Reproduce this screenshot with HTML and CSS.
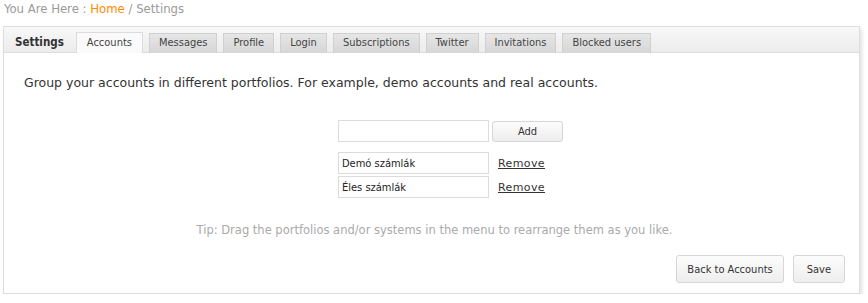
FILE: index.html
```html
<!DOCTYPE html>
<html lang="en">
<head>
    <meta charset="UTF-8">
    <title>Settings - Accounts</title>
    <link rel="stylesheet" href="styles.css">
</head>
<body>
    <div class="breadcrumb">
        You Are Here : <a href="#" class="crumb-link">Home</a> / Settings
    </div>

    <div class="panel">
        <div class="tab-bar">
            <span class="tab-title">Settings</span>
            <a href="#" class="tab active">Accounts</a>
            <a href="#" class="tab">Messages</a>
            <a href="#" class="tab">Profile</a>
            <a href="#" class="tab">Login</a>
            <a href="#" class="tab">Subscriptions</a>
            <a href="#" class="tab">Twitter</a>
            <a href="#" class="tab">Invitations</a>
            <a href="#" class="tab">Blocked users</a>
        </div>

        <div class="panel-body">
            <p class="intro">Group your accounts in different portfolios. For example, demo accounts and real accounts.</p>

            <div class="portfolio-form">
                <input type="text" class="field">
                <button class="btn btn-add">Add</button>

                <input type="text" class="field first-item" value="Demó számlák">
                <a href="#" class="remove-link first-item">Remove</a>

                <input type="text" class="field" value="Éles számlák">
                <a href="#" class="remove-link">Remove</a>
            </div>

            <p class="tip">Tip: Drag the portfolios and/or systems in the menu to rearrange them as you like.</p>

            <div class="actions">
                <button class="btn">Back to Accounts</button>
                <button class="btn btn-save">Save</button>
            </div>
        </div>
    </div>
</body>
</html>
```

FILE: styles.css
```css
* {
    margin: 0;
    padding: 0;
    box-sizing: border-box;
}

body {
    font-family: "DejaVu Sans Condensed", "DejaVu Sans", sans-serif;
    background: white;
    color: #333;
    padding: 0 8px 0 3px;
}

.breadcrumb {
    font-size: 13px;
    line-height: 18px;
    color: #9a9a9a;
    padding-left: 1px;
    margin-bottom: 8px;
}

.crumb-link {
    color: #ff8a00;
    text-decoration: none;
}

.panel {
    border: 1px solid #ddd;
    background: white;
    box-shadow: 2px 3px 4px rgba(0, 0, 0, 0.12);
}

.tab-bar {
    display: flex;
    align-items: flex-end;
    gap: 6px;
    height: 26px;
    padding-left: 11px;
    background: linear-gradient(#f8f8f8, #ececec);
    border-bottom: 1px solid #dcdcdc;
}

.tab-title {
    font-weight: bold;
    font-size: 11.5px;
    color: #333;
    line-height: 20px;
    align-self: center;
    margin-right: 6px;
    margin-top: 4px;
}

.tab {
    display: block;
    height: 20px;
    line-height: 18px;
    padding: 0 9px;
    font-size: 11px;
    color: #444;
    text-decoration: none;
    background: linear-gradient(#e6e6e6, #d6d6d6);
    border: 1px solid #d0d0d0;
    border-bottom: none;
    margin-bottom: -1px;
}

.tab.active {
    background: #fafafa;
    border-color: #dcdcdc;
    height: 21px;
    line-height: 20px;
    padding: 0 10px;
}

.panel-body {
    padding: 21px 14px 10px 20px;
}

.intro {
    font-family: "DejaVu Sans", sans-serif;
    font-size: 12.5px;
    line-height: 18px;
    color: #333;
}

.portfolio-form {
    display: grid;
    grid-template-columns: 151px 71px;
    column-gap: 3px;
    row-gap: 2px;
    margin: 28px 0 0 314px;
    align-items: center;
}

.field {
    height: 22px;
    border: 1px solid #dcdcdc;
    font-family: "DejaVu Sans Condensed", "DejaVu Sans", sans-serif;
    font-size: 11px;
    color: #222;
    padding: 0 3px;
}

.first-item {
    margin-top: 8px;
}

.remove-link {
    font-family: "DejaVu Sans", sans-serif;
    font-size: 11px;
    letter-spacing: 0.4px;
    color: #333;
    padding-left: 6px;
}

.btn {
    font-family: "DejaVu Sans Condensed", "DejaVu Sans", sans-serif;
    font-size: 11px;
    color: #333;
    background: linear-gradient(#fcfcfc, #eeeeee);
    border: 1px solid #d6d6d6;
    border-radius: 3px;
    height: 28px;
    padding: 0 10px;
    cursor: pointer;
}

.btn-save {
    padding: 0 13px;
}

.btn-add {
    height: 21px;
    font-size: 11px;
}

.tip {
    font-family: "DejaVu Sans", sans-serif;
    text-align: center;
    font-size: 11.5px;
    color: #aaa;
    margin-top: 25px;
    margin-left: 0;
}

.actions {
    display: flex;
    justify-content: flex-end;
    gap: 9px;
    margin-top: 18px;
}
```
